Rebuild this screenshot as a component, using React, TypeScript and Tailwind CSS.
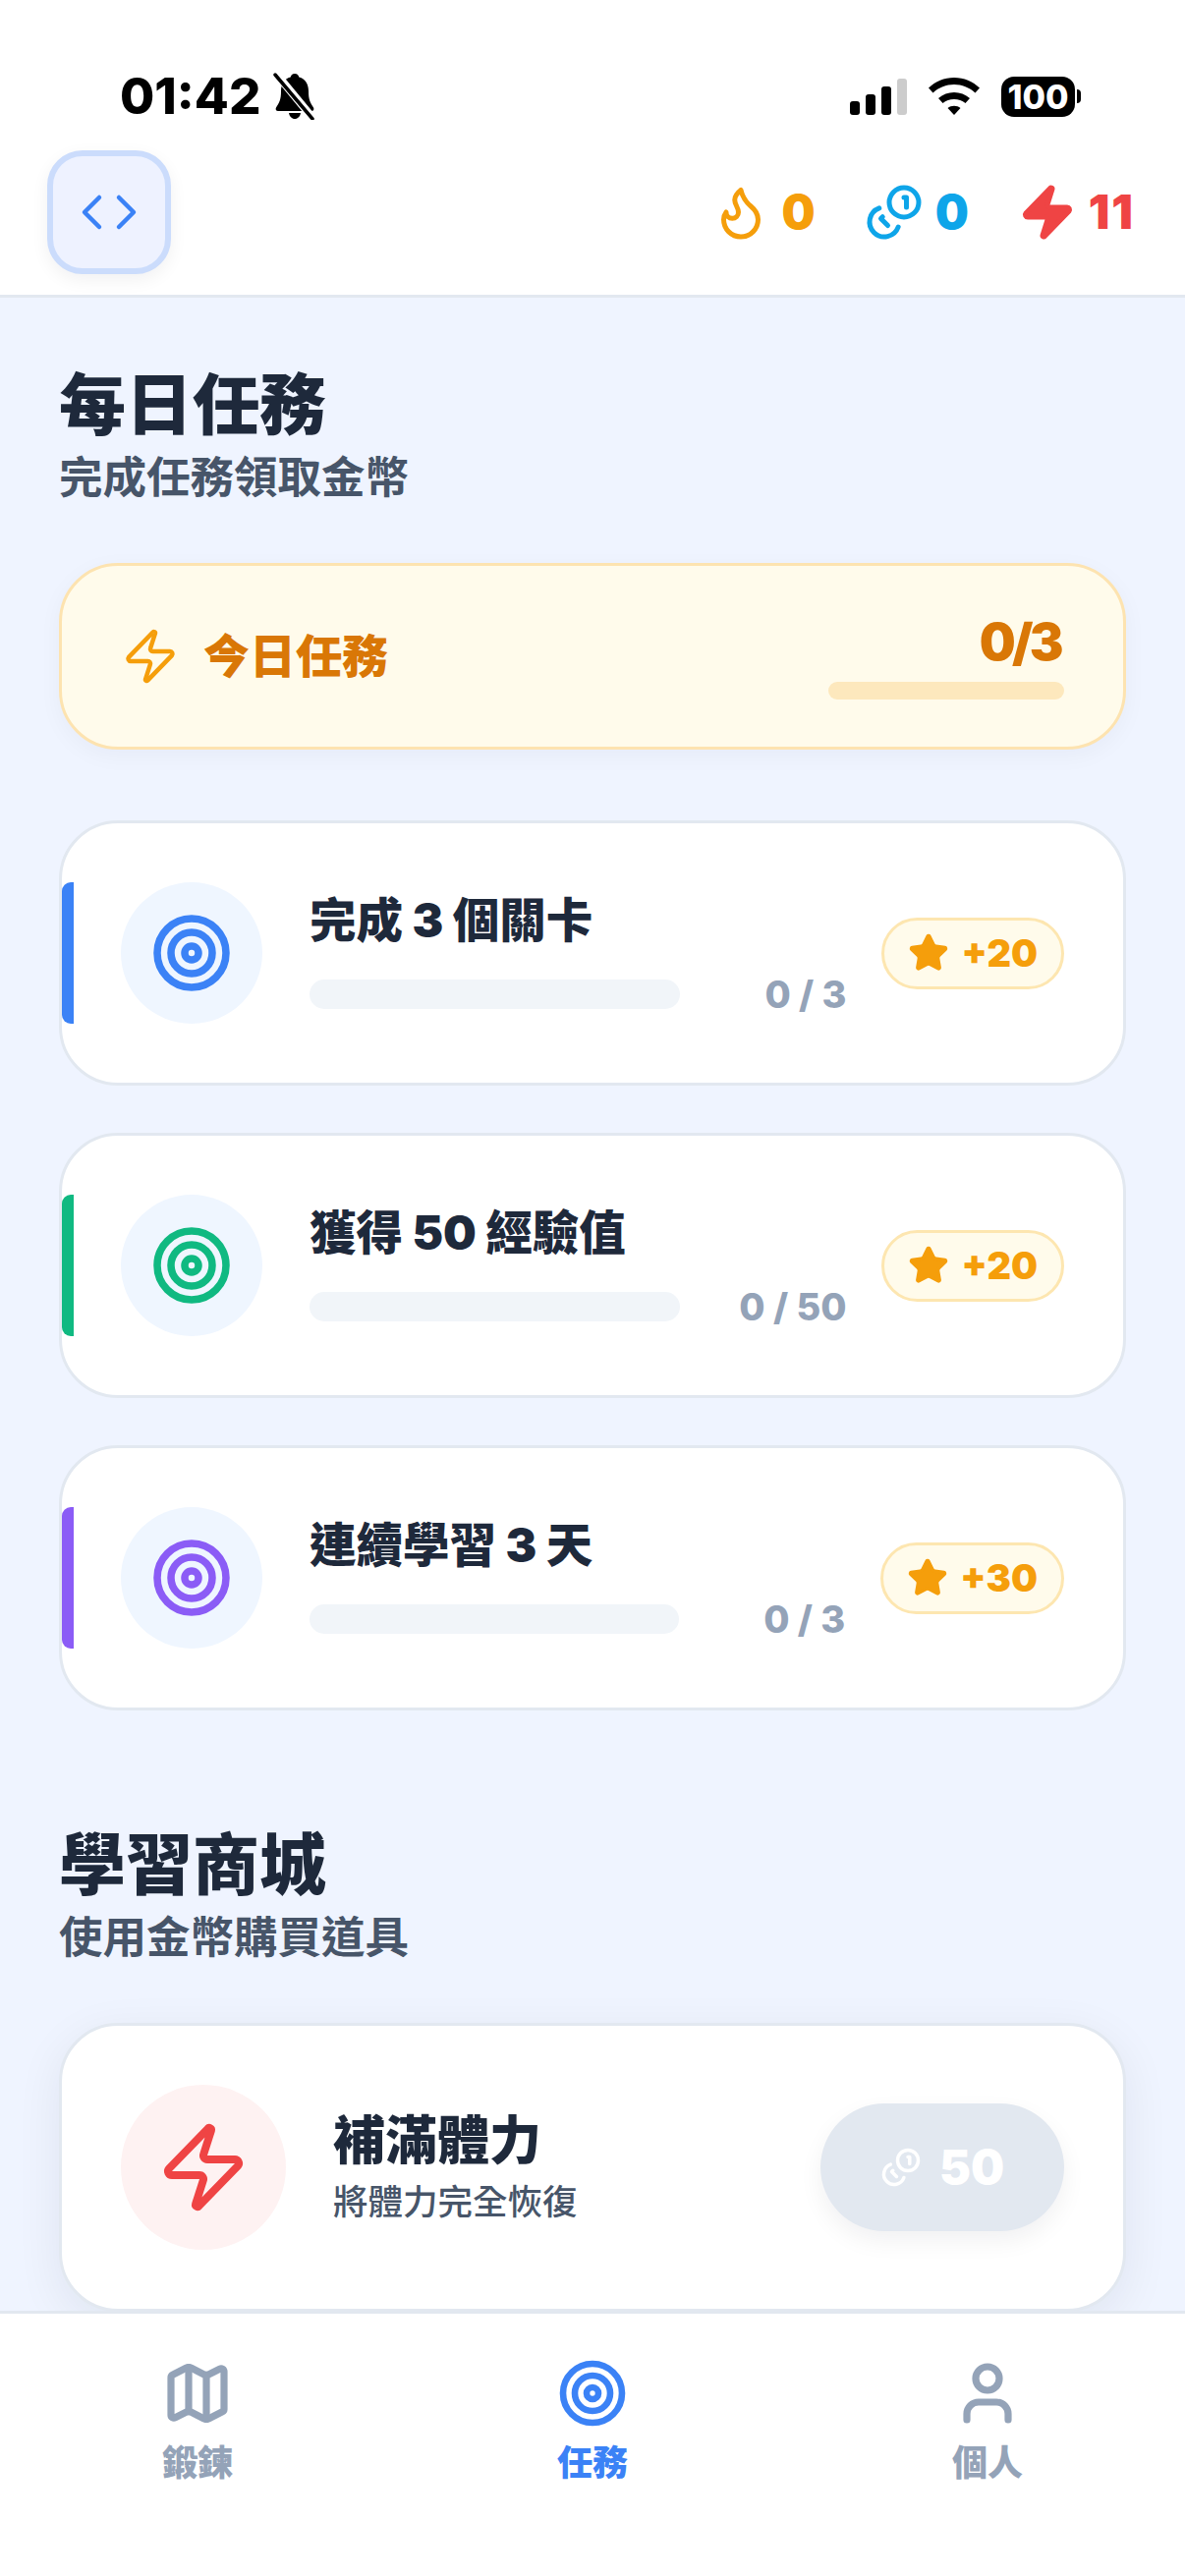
import React from 'react';
import { Code, Flame, Map as MapIcon, Star, Target, User, Zap } from 'lucide-react';

// lucide's Coins is mirrored in the design, but the "1"s stay readable, so it's redrawn
const CoinsIcon = ({ size, color, width = 2 }: { size: number; color: string; width?: number }) => (
  <svg width={size} height={size} viewBox="0 0 24 24" fill="none" stroke={color} strokeWidth={width} strokeLinecap="round" strokeLinejoin="round">
    <circle cx="16" cy="8" r="6" />
    <path d="M5.91 10.37A6 6 0 1 0 13.66 18" />
    <path d="M16 6h1v4" />
    <path d="m7.29 13.88-.7.71 2.82 2.82" />
  </svg>
);

const BellSlash = () => (
  <svg width="46" height="48" viewBox="0 0 46 48" fill="none">
    <path d="M23 1c2.5 0 4 1.600 4.300 3.600C34 6.300 37 12 37 19c0 8 1.500 11 5 16.500 1 1.800 0 3.500-2 3.500H6c-2 0-3-1.700-2-3.500C7.500 30 9 27 9 19 9 12 12 6.300 18.700 4.600 19 2.600 20.500 1 23 1z" fill="#000" />
    <path d="M17 41h12c-.6 3.500-3 6-6 6s-5.400-2.500-6-6z" fill="#000" />
    <path d="M4 1l38 46" stroke="#fff" strokeWidth="8" />
    <path d="M3 2l38 45" stroke="#000" strokeWidth="3.500" strokeLinecap="round" />
  </svg>
);

const WifiGlyph = () => (
  <svg width="52" height="38" viewBox="0 0 52 38" fill="#000">
    <path d="M0 10.500C7 4 16 0 26 0s19 4 26 10.500l-4.500 5C41.500 10 34 7 26 7S10.500 10 4.500 15.500z" />
    <path d="M10 21C14.500 17 20 15 26 15s11.500 2 16 6l-4.500 5C34.300 23.200 30.300 22 26 22s-8.300 1.200-11.500 4z" />
    <path d="M19.500 31c1.800-1.500 4-2.200 6.500-2.200s4.700.7 6.500 2.200L26 38z" />
  </svg>
);

const tasks = [
  { title: '完成 3 個關卡', progress: '0 / 3', reward: '+20', bar: 'bg-[#3b82f6]', color: '#3b82f6' },
  { title: '獲得 50 經驗值', progress: '0 / 50', reward: '+20', bar: 'bg-[#10b981]', color: '#10b981' },
  { title: '連續學習 3 天', progress: '0 / 3', reward: '+30', bar: 'bg-[#8b5cf6]', color: '#8b5cf6' },
];

const SectionTitle = ({ title, subtitle }: { title: string; subtitle: string }) => (
  <div className="mb-[60px]">
    <h1 className="pt-[2px] text-[68px] leading-[94px] font-black text-[#1e293b]">{title}</h1>
    <p className="text-[44.500px] leading-[54px] font-bold text-[#475569]">{subtitle}</p>
  </div>
);

const TaskCard = ({ task }: { task: (typeof tasks)[number] }) => (
  <div className="relative flex h-[270px] items-center rounded-[60px] border-[3px] border-[#e2e8f0] bg-white px-[60px]">
    <div className={`absolute left-0 top-[60px] h-[144px] w-[12px] rounded-l-[9px] ${task.bar}`}></div>
    <div className="flex h-[144px] w-[144px] shrink-0 items-center justify-center rounded-full bg-[#eff6ff]">
      <Target size={84} color={task.color} strokeWidth={2.150} />
    </div>
    <div className="ml-[48px] min-w-0 flex-1">
      <div className="text-[47.500px] leading-[60px] font-black text-[#1e293b]">{task.title}</div>
      <div className="mt-[24px] flex h-[42px] items-center justify-between">
        <div className="h-[30px] w-[69%] rounded-full bg-[#f1f5f9]"></div>
        <span className="text-[38px] leading-[42px] font-extrabold text-[#94a3b8]">{task.progress}</span>
      </div>
    </div>
    <div className="ml-[36px] flex h-[73px] shrink-0 items-center gap-[12px] rounded-full border-[3px] border-[#fde6b0] bg-[#fffbeb] px-[24px]">
      <Star size={42} color="#f59e0b" fill="#f59e0b" />
      <span className="text-[38px] font-black text-[#f59e0b]">{task.reward}</span>
    </div>
  </div>
);

const NavItem = ({ label, active, children }: { label: string; active?: boolean; children: React.ReactNode }) => (
  <div className="flex flex-col items-center">
    <div className="flex h-[72px] w-[72px] items-center justify-center">{children}</div>
    <span className={`mt-[11px] text-[36px] leading-[48px] font-black ${active ? 'text-[#3b82f6]' : 'text-[#94a3b8]'}`}>{label}</span>
  </div>
);

const App: React.FC = () => {
  return (
    <div className="flex h-[2622px] w-[1206px] flex-col overflow-hidden bg-[#eff4ff] font-[Inter,'Noto_Sans_CJK_TC',sans-serif]">
      {/* Top: status bar + stats */}
      <header className="h-[303px] shrink-0 border-b-[3px] border-[#e2e8f0] bg-white px-[48px]">
        <div className="flex h-[153px] items-start justify-between pt-[72px]">
          <div className="ml-[74px] flex h-[52px] items-center gap-[12px]">
            <span className="text-[51px] leading-[52px] font-extrabold text-black">01:42</span>
            <BellSlash />
          </div>
          <div className="mr-[58px] flex h-[52px] items-center">
            <div className="flex h-[37px] items-end gap-[6px]">
              <span className="h-[14px] w-[10px] rounded-[3px] bg-black"></span>
              <span className="h-[21px] w-[10px] rounded-[3px] bg-black"></span>
              <span className="h-[29px] w-[10px] rounded-[3px] bg-black"></span>
              <span className="h-[37px] w-[10px] rounded-[3px] bg-[#cccccc]"></span>
            </div>
            <div className="ml-[22px]"><WifiGlyph /></div>
            <div className="ml-[22px] flex h-[41px] w-[75px] items-center justify-center rounded-[13px] bg-black text-[34px] font-extrabold text-white">100</div>
            <span className="ml-[2px] h-[14px] w-[4px] rounded-r-full bg-black"></span>
          </div>
        </div>
        <div className="flex items-center justify-between">
          <div className="flex h-[126px] w-[126px] items-center justify-center rounded-[36px] border-[6px] border-[#cbdcfc] bg-[#eef2ff] shadow-[0_6px_18px_rgba(15,23,42,0.06)]">
            <Code size={60} color="#3b82f6" strokeWidth={1.800} />
          </div>
          <div className="mr-[3px] flex items-center gap-[50px]">
            <div className="flex items-center gap-[12px]">
              <Flame size={60} color="#f59e0b" />
              <span className="text-[48px] font-black text-[#f59e0b]">0</span>
            </div>
            <div className="flex items-center gap-[12px]">
              <CoinsIcon size={60} color="#0ea5e9" />
              <span className="text-[48px] font-black text-[#0ea5e9]">0</span>
            </div>
            <div className="flex items-center gap-[12px]">
              <Zap size={60} color="#ef4444" fill="#ef4444" />
              <span className="text-[48px] tracking-[0.04em] font-black text-[#ef4444]">11</span>
            </div>
          </div>
        </div>
      </header>

      <main className="min-h-0 flex-1 overflow-hidden px-[60px] pt-[60px]">
        <SectionTitle title="每日任務" subtitle="完成任務領取金幣" />

        <div className="flex h-[190px] items-center justify-between rounded-[60px] border-[3px] border-[#fde3b0] bg-[#fffbeb] px-[60px] shadow-[0_6px_24px_rgba(15,23,42,0.04)]">
          <div className="flex items-center gap-[24px]">
            <Zap size={60} color="#f59e0b" strokeWidth={1.800} />
            <span className="text-[47px] font-black text-[#d97706]">今日任務</span>
          </div>
          <div className="flex w-[240px] flex-col items-end">
            <span className="mr-[4px] text-[52px] leading-[60px] tracking-[-0.07em] font-black text-[#d97706]">0/3</span>
            <div className="mt-[10px] h-[18px] w-full rounded-full bg-[#fde8bd]"></div>
          </div>
        </div>

        <div className="mt-[72px] flex flex-col gap-[48px]">
          {tasks.map(task => (
            <TaskCard key={task.title} task={task} />
          ))}
        </div>

        <div className="mt-[108px]">
          <SectionTitle title="學習商城" subtitle="使用金幣購買道具" />
          <div className="flex items-center rounded-[60px] border-[3px] border-[#e2e8f0] bg-white p-[60px] shadow-[0_12px_48px_rgba(15,23,42,0.07)]">
            <div className="flex h-[168px] w-[168px] shrink-0 items-center justify-center rounded-full bg-[#fef2f2]">
              <Zap size={96} color="#ef4444" />
            </div>
            <div className="ml-[48px] flex-1">
              <div className="text-[53px] leading-[66px] font-black text-[#1e293b]">補滿體力</div>
              <div className="mt-[6px] text-[35.500px] leading-[48px] font-medium text-[#475569]">將體力完全恢復</div>
            </div>
            <div className="flex h-[130px] w-[248px] items-center justify-center gap-[18px] rounded-full bg-[#e2e8f0] shadow-[0_10px_24px_rgba(15,23,42,0.06)]">
              <CoinsIcon size={42} color="#ffffff" />
              <span className="text-[48px] font-black text-white">50</span>
            </div>
          </div>
        </div>
      </main>

      <nav className="grid h-[270px] shrink-0 grid-cols-3 border-t-[3px] border-[#e2e8f0] bg-white pt-[45px]">
        <NavItem label="鍛鍊"><MapIcon size={72} color="#94a3b8" strokeWidth={2.400} /></NavItem>
        <NavItem label="任務" active><Target size={72} color="#3b82f6" strokeWidth={2.200} /></NavItem>
        <NavItem label="個人"><User size={72} color="#94a3b8" strokeWidth={2.400} /></NavItem>
      </nav>
    </div>
  );
};

export default App;
